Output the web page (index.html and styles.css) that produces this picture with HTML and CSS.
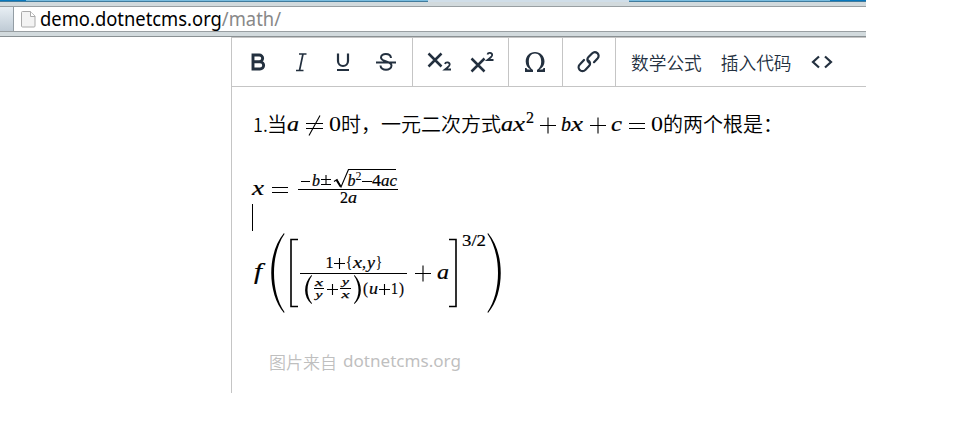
FILE: index.html
```
<!DOCTYPE html>
<html lang="zh-CN">
<head>
<meta charset="utf-8">
<title>math</title>
<link rel="stylesheet" href="styles.css">
</head>
<body>
<div class="window">
  <header class="chrome">
    <div class="tabs"><i class="tab tab-dark"></i><i class="tab tab-wide"></i><i class="gap"></i><i class="tab tab-right"></i><i class="tab tab-end"></i></div>
    <div class="address">
      <div class="handle"></div>
      <svg class="page-icon" width="15" height="17" viewBox="0 0 15 17"><path d="M.5 1.5q0-1 1-1H9.5l4.500 4.500V15q0 1-1 1H1.500q-1 0-1-1z" fill="#f3f3f3" stroke="#aaa"/><path d="M9.500.5V5.500H14" fill="#fff" stroke="#aaa"/></svg>
      <svg class="url" width="250" height="24"><text x="0" y="19" textLength="241" lengthAdjust="spacingAndGlyphs">demo.dotnetcms.org<tspan class="path">/math/</tspan></text></svg>
    </div>
    <div class="edge"></div>
  </header>
  <main class="editor">
    <div class="toolbar">
      <div class="group g1">
        <svg width="180" height="48" viewBox="0 0 180 48" fill="none" stroke="#23303f" stroke-width="2">
          <path d="M21 17h6.300a3.300 3.300 0 0 1 0 6.700H21zM21 23.700h7a3.650 3.650 0 0 1 0 7.300h-7z" stroke-width="2.900"/>
          <path d="M67 16h7.500M64 32.500h7.500M71 16L67.500 32.500" stroke-width="1.700"/>
          <path d="M106 15.500v7.500a5 5 0 0 0 10 0V15.500M105 32h12" stroke-width="2.200"/>
          <path d="M159 20c-.5-5.500-10-5-10-.5 0 5 10.500 3 10.500 8 0 5.500-11 5.500-11 0M144 24.500h20" stroke-width="2"/>
        </svg>
      </div>
      <div class="group g2">
        <svg width="95" height="48" viewBox="0 0 95 48" fill="none" stroke="#23303f" stroke-width="2.500">
          <path d="M15.500 15.500l13 13M28.500 15.500l-13 13M58.500 20.500l13 13M71.500 20.500l-13 13"/>
          <path d="M32 26c.5-2.500 4.700-2 4.700.5 0 1.500-1 2.300-4.700 5h6M74.500 16.500c.5-2.500 4.700-2 4.700.5 0 1.500-1 2.300-4.700 5h6" stroke-width="1.800"/>
        </svg>
      </div>
      <div class="group g3">
        <svg width="53" height="48" viewBox="0 0 53 48"><path d="M16 34v-4h1.500q.3 1.500 1.500 1.500h2.500c-3-2-4.800-4.300-4.800-8C16.700 18 20.700 14 26 14s9.500 4 9.500 9.500c0 3.700-2 6-5 8H33q1.200 0 1.500-1.500H36v4h-8v-2c2.700-2 4.200-4.300 4.200-8.200 0-5-2.300-8.200-6.200-8.200s-6.200 3.200-6.200 8.200c0 3.900 1.500 6.200 4.200 8.200v2z" fill="#23303f"/></svg>
      </div>
      <div class="group g4">
        <svg width="52" height="48" viewBox="0 0 52 48" fill="none" stroke="#23303f" stroke-width="2.200" stroke-linecap="round"><path transform="translate(0 .5)" d="M26 24c-2-1.500-2.200-3.700-.5-5.500l3.500-3.500c3.500-3.500 9 1 5.500 5l-3.500 3.700M21 21.500l-4 4.200c-4 4 1.500 9.500 5.500 5.500l3.500-3.700c1.800-1.800 1.300-4.200-.7-5.500"/></svg>
      </div>
      <div class="group g5">
        <span class="button">数学公式</span><span class="button">插入代码</span>
        <svg width="22" height="14" viewBox="0 0 22 14" fill="none" stroke="#23303f" stroke-width="2.200"><path d="M8 1.500L2 7l6 5.500M14 1.500L20 7l-6 5.500"/></svg>
      </div>
    </div>
    <div class="content">
      <div class="line">
        <span class="number">1.</span><span>当</span>
        <svg class="math" width="54" height="36"><g class="var"><text x="0" y="25" textLength="12" lengthAdjust="spacingAndGlyphs">a</text></g><path d="M19 17.500h17M19 22.500h17M33 9.500L22 29.500"/><text x="42" y="25" textLength="12" lengthAdjust="spacingAndGlyphs">0</text></svg>
        <span>时，一元二次方式</span>
        <svg class="math" width="162" height="36"><g class="var"><text x="0" y="25" textLength="12" lengthAdjust="spacingAndGlyphs">a</text><text x="12" y="25" textLength="12" lengthAdjust="spacingAndGlyphs">x</text><text x="60" y="25" textLength="10" lengthAdjust="spacingAndGlyphs">b</text><text x="70" y="25" textLength="12" lengthAdjust="spacingAndGlyphs">x</text><text x="110" y="25" textLength="11" lengthAdjust="spacingAndGlyphs">c</text></g><text class="small" x="25" y="17" textLength="8" lengthAdjust="spacingAndGlyphs">2</text><path d="M39 19.500h16M47 11.500v16M89 19.500h16M97 11.500v16M128 17.500h16M128 22.500h16"/><text x="150" y="25" textLength="12" lengthAdjust="spacingAndGlyphs">0</text></svg>
        <span>的两个根是：</span>
      </div>
      <svg class="math quadratic" width="160" height="44" viewBox="0 0 160 44">
        <g class="var"><text x="0" y="32" textLength="12" lengthAdjust="spacingAndGlyphs">x</text></g>
        <path d="M20 24.500h16M20 29.500h16M49 18.500h9M69 16.500h10M74 12v9M69 21.500h10M110 18.500h10"/>
        <path class="bar" d="M46 26.500h100M96 6.500h48"/>
        <path d="M82 18.500l3-2 4 7.500L96.500 6.500"/><path d="M84.500 17l4 6.500" class="heavy"/>
        <g class="small var"><text x="60" y="23" textLength="8" lengthAdjust="spacingAndGlyphs">b</text><text x="95.500" y="23" textLength="8" lengthAdjust="spacingAndGlyphs">b</text><text x="129" y="23" textLength="16" lengthAdjust="spacingAndGlyphs">ac</text><text x="96" y="40" textLength="9" lengthAdjust="spacingAndGlyphs">a</text></g>
        <text class="tiny" x="103.500" y="17" textLength="6" lengthAdjust="spacingAndGlyphs">2</text><text class="small" x="120" y="23" textLength="9" lengthAdjust="spacingAndGlyphs">4</text><text class="small" x="88" y="40" textLength="8" lengthAdjust="spacingAndGlyphs">2</text>
      </svg>
      <div class="caret"></div>
      <svg class="math nested" width="260" height="86" viewBox="0 0 260 86">
        <g class="var"><text class="func" x="2" y="49" textLength="8" lengthAdjust="spacingAndGlyphs">f</text><text x="185" y="49" textLength="12" lengthAdjust="spacingAndGlyphs">a</text></g>
        <path class="solid" d="M32 3C15 23 15 63 32 83L32.500 82C18.500 62 18.500 24 32.500 4zM236 3C253 23 253 63 236 83L235.500 82C249.500 62 249.500 24 235.500 4z"/>
        <path class="bracket" d="M46 9.500h-7v67h7M197 9.500h7v67h-7"/>
        <path class="bar" d="M48 43.500h107M62 58.500h10M88 58.500h11"/>
        <path d="M163 43.500h16M171 35.500v16M82 33.500h11M87.500 28v11M75 59.500h11M80.500 54v11M127 59.500h11M132.500 54v11"/>
        <path class="solid" d="M59.500 45C51 54 51 67 59.500 74L60 73.300C54 66 54 54 60 45.700zM102.500 45c8.500 9 8.500 22 0 29l-.5-.7c6-7 6-19 0-27.600z"/>
        <g class="small"><text x="73.500" y="38" textLength="8" lengthAdjust="spacingAndGlyphs">1</text><text x="94" y="38" textLength="6" lengthAdjust="spacingAndGlyphs">{</text><g class="var"><text x="101" y="38" textLength="9" lengthAdjust="spacingAndGlyphs">x</text><text x="115" y="38" textLength="8" lengthAdjust="spacingAndGlyphs">y</text><text x="117" y="64" textLength="9" lengthAdjust="spacingAndGlyphs">u</text></g><text x="110" y="38">,</text><text x="124" y="38" textLength="6" lengthAdjust="spacingAndGlyphs">}</text><text x="111" y="64" textLength="5" lengthAdjust="spacingAndGlyphs">(</text><text x="139" y="64" textLength="7" lengthAdjust="spacingAndGlyphs">1</text><text x="147" y="64" textLength="5" lengthAdjust="spacingAndGlyphs">)</text><text x="210" y="16" textLength="24" lengthAdjust="spacingAndGlyphs">3/2</text></g>
        <g class="script var"><text x="63" y="56" textLength="8" lengthAdjust="spacingAndGlyphs">x</text><text x="63.500" y="68" textLength="7" lengthAdjust="spacingAndGlyphs">y</text><text x="90" y="54.500" textLength="7" lengthAdjust="spacingAndGlyphs">y</text><text x="89.500" y="68" textLength="8" lengthAdjust="spacingAndGlyphs">x</text></g>
      </svg>
      <div class="credit"><span>图片来自</span><svg width="120" height="28"><text x="0" y="19" textLength="118" lengthAdjust="spacingAndGlyphs">dotnetcms.org</text></svg></div>
    </div>
  </main>
</div>
</body>
</html>
```
FILE: styles.css
```
* { box-sizing: border-box; }
body { margin: 0; background: #fff; }
svg { display: block; flex: none; }
.window { width: 866px; font-family: "Noto Sans", "Noto Sans CJK SC", sans-serif; }
.chrome { height: 37px; }
.tabs { display: flex; height: 6px; background: #d2dadd; }
.tab { height: 2px; background: #79bde0; border-bottom: 1px solid #427b9c; }
.tab-dark { width: 26px; background: #0878bd; }
.tab-wide { width: 402px; }
.gap { width: 201px; height: 2px; background: #d0dee9; }
.tab-right { width: 201px; }
.tab-end { width: 36px; background: #0878bd; }
.address { display: flex; height: 26px; border-top: 1px solid #999fa2; border-bottom: 1px solid #999fa2; }
.handle { width: 14px; background: linear-gradient(#e8eff4, #bfcbd5); border-right: 1px solid #939da4; }
.page-icon { margin: 4px 4px 0 7px; }
.url { font-size: 19px; }
.path { fill: #888; }
.edge { height: 5px; background: #d2dadd; border-bottom: 1px solid #899093; }
.editor { margin-left: 231px; height: 356px; border-left: 1px solid #c5c5c5; border-top: 1px solid #c5c5c5; }
.toolbar { display: flex; height: 49px; border-bottom: 1px solid #c5c5c5; }
.group { border-right: 1px solid #c5c5c5; }
.g1 { width: 181px; }
.g2 { width: 96px; }
.g3 { width: 54px; }
.g4 { width: 53px; }
.g5 { display: flex; flex: 1; align-items: center; gap: 19px; padding-left: 15px; border: 0; }
.button { font: 350 17.700px/26px "Noto Sans CJK SC", sans-serif; color: #23303f; white-space: nowrap; }
.content { padding: 19px 0 0 20px; }
.line { display: flex; width: 540px; height: 36px; margin-left: 1px; font: 350 20px/36px "Noto Sans CJK SC", sans-serif; white-space: nowrap; }
.number { width: 14px; font-size: 18px; }
.math { font-family: "Liberation Serif", serif; font-size: 21px; fill: #000; overflow: visible; }
.math .var { font-style: italic; stroke: #000; stroke-width: .2px; }
.math .small { font-size: 16px; stroke: #000; stroke-width: .2px; }
.math .tiny { font-size: 12px; }
.math .script { font-size: 11px; stroke-width: .25px; }
.math .func { font-size: 23px; }
.math path { fill: none; stroke: #000; stroke-width: 1.100; }
.math .bar { stroke-width: 1.200; }
.math .heavy { stroke-width: 1.800; }
.math .bracket { stroke-width: 1.600; }
.math .solid { fill: #000; stroke: none; }
.quadratic { margin-top: 21px; }
.caret { width: 1px; height: 27px; margin-top: -3px; background: #000; }
.nested { margin-top: -1px; }
.credit { display: flex; gap: 6px; height: 28px; margin: 32px 0 0 17px; color: #bfbfbf; font: 350 17px/28px "Noto Sans CJK SC", sans-serif; }
.credit svg { font-family: "Noto Sans", sans-serif; font-size: 17px; font-weight: 400; fill: #bfbfbf; }
```
